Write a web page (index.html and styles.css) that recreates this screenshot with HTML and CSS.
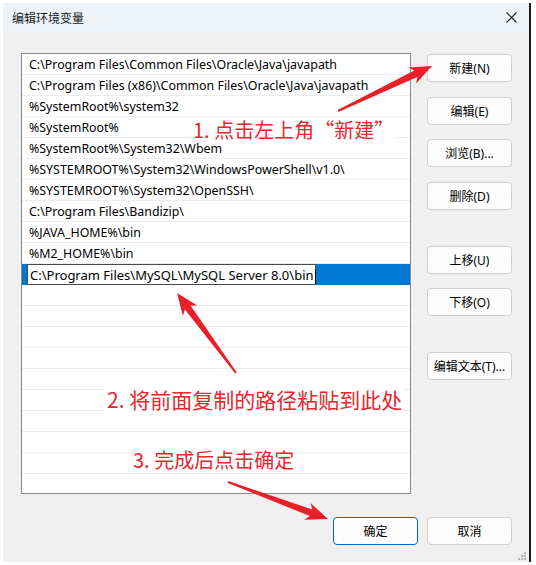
FILE: index.html
```html
<!DOCTYPE html>
<html lang="zh-CN">
<head>
  <meta charset="UTF-8">
  <title>编辑环境变量</title>
  <link rel="stylesheet" href="styles.css">
</head>
<body>
  <div class="window">
    <div class="titlebar">
      <span class="title">编辑环境变量</span>
      <span class="close">
        <svg width="11" height="11" viewBox="0 0 11 11"><path d="M0.5 0.5 L10.5 10.5 M10.5 0.5 L0.5 10.5" stroke="#222" stroke-width="1.1"/></svg>
      </span>
    </div>
    <div class="content">
      <div class="main">
        <div class="list">
          <div class="row">C:\Program Files\Common Files\Oracle\Java\javapath</div>
          <div class="row">C:\Program Files (x86)\Common Files\Oracle\Java\javapath</div>
          <div class="row">%SystemRoot%\system32</div>
          <div class="row">%SystemRoot%</div>
          <div class="row">%SystemRoot%\System32\Wbem</div>
          <div class="row">%SYSTEMROOT%\System32\WindowsPowerShell\v1.0\</div>
          <div class="row">%SYSTEMROOT%\System32\OpenSSH\</div>
          <div class="row">C:\Program Files\Bandizip\</div>
          <div class="row">%JAVA_HOME%\bin</div>
          <div class="row">%M2_HOME%\bin</div>
          <div class="row selected">
            <div class="edit">C:\Program Files\MySQL\MySQL Server 8.0\bin<span class="caret"></span></div>
          </div>
          <div class="row"></div>
          <div class="row"></div>
          <div class="row"></div>
          <div class="row"></div>
          <div class="row"></div>
          <div class="row"></div>
          <div class="row"></div>
          <div class="row"></div>
          <div class="row"></div>
          <div class="row last"></div>
        </div>
        <div class="side">
          <button class="btn">新建(N)</button>
          <button class="btn">编辑(E)</button>
          <button class="btn">浏览(B)...</button>
          <button class="btn">删除(D)</button>
          <button class="btn far">上移(U)</button>
          <button class="btn">下移(O)</button>
          <button class="btn far">编辑文本(T)...</button>
        </div>
      </div>
      <div class="footer">
        <button class="btn primary">确定</button>
        <button class="btn">取消</button>
      </div>
    </div>
    <svg class="grip" width="10" height="10" viewBox="0 0 10 10">
      <rect x="7" y="1" width="2" height="2" fill="#b4b4b4"/>
      <rect x="4" y="4" width="2" height="2" fill="#b4b4b4"/>
      <rect x="7" y="4" width="2" height="2" fill="#b4b4b4"/>
      <rect x="1" y="7" width="2" height="2" fill="#b4b4b4"/>
      <rect x="4" y="7" width="2" height="2" fill="#b4b4b4"/>
      <rect x="7" y="7" width="2" height="2" fill="#b4b4b4"/>
    </svg>
  </div>

  <!-- annotations drawn over the screenshot -->
  <div class="note note1">1. 点击左上角“新建”</div>
  <div class="note note2">2. 将前面复制的路径粘贴到此处</div>
  <div class="note note3">3. 完成后点击确定</div>
  <svg class="arrows" width="536" height="565" viewBox="0 0 536 565">
    <polygon points="338.4,111.9 417.3,77 416.1,83.6 432,66 408.3,67.4 414.3,70.6 337.6,110.1"/>
    <polygon points="236.8,372.4 190.5,305.4 197.3,305.4 177,293 182.9,316 184.9,309.6 235.2,373.6"/>
    <polygon points="227.7,482.9 309.9,516.1 304.3,519.8 328,519 310.5,503 312.3,509.5 228.3,481.1"/>
  </svg>
</body>
</html>
```

FILE: styles.css
```css
body {
  margin: 0;
  background: #fff;
  font-family: "Noto Sans", "Noto Sans CJK SC", sans-serif;
  font-size: 12px;
  color: #000;
}
.window {
  margin: 3px 0 0 3px;
  width: 526px;
  height: 559px;
  background: #f0f0f0;
  border-right: 2px solid #1e1e1e;
  position: relative;
}
.titlebar {
  height: 29px;
  background: #eef3f8;
  display: flex;
  align-items: center;
  justify-content: space-between;
  padding: 0 12px 0 9px;
}
.title {
  font-family: "Noto Sans CJK SC", sans-serif;
  font-size: 12px;
  color: #1a1a1a;
}
.close {
  display: flex;
}
.content {
  padding: 21px 17px 0 18px;
}
.main {
  display: flex;
  gap: 16px;
}
.list {
  width: 389px;
  height: 439px;
  border: 1px solid #8c8c94;
  background: #fff;
  overflow: hidden;
}
.row {
  height: 19px;
  padding-top: 1px;
  border-bottom: 1px solid #ececec;
  padding-left: 7px;
  line-height: 20px;
  font-size: 12.4px;
  white-space: nowrap;
}
.row.last {
  border-bottom: none;
}
.row.selected {
  background: #0078d4;
  border-bottom-color: #0078d4;
  padding-left: 5px;
  padding-top: 0;
  height: 20px;
}
.edit {
  width: 285px;
  height: 19px;
  line-height: 20px;
  font-size: 13px;
  background: #fff;
  border: 1px solid #4a4a4a;
  padding-left: 2px;
}
.caret {
  display: inline-block;
  width: 1px;
  height: 14px;
  background: #000;
  vertical-align: middle;
  margin-left: 1px;
}
.side {
  display: flex;
  flex-direction: column;
  gap: 14px;
  padding-top: 1px;
}
.btn {
  width: 85px;
  height: 28px;
  background: #fdfdfd;
  border: 1px solid #d0d0d0;
  border-radius: 4px;
  font-family: "Noto Sans", "Noto Sans CJK SC", sans-serif;
  font-size: 12px;
  color: #000;
  padding: 0;
}
.side .btn:nth-child(2),
.side .btn:nth-child(4) {
  margin-top: 1px;
}
.btn.far {
  margin-top: 22px;
}
.primary {
  border-color: #0067c0;
}
.footer {
  display: flex;
  justify-content: flex-end;
  gap: 9px;
  margin-top: 23px;
}
.grip {
  position: absolute;
  right: 2px;
  bottom: 1px;
}
.note {
  position: absolute;
  font-family: "Noto Sans CJK SC", sans-serif;
  font-size: 20px;
  line-height: 26px;
  color: #e8262e;
  background: #fff;
  padding: 0 2px;
}
.note1 {
  left: 191px;
  top: 117px;
}
.note2 {
  left: 105px;
  top: 386px;
  font-size: 21px;
}
.note3 {
  left: 131px;
  top: 447px;
}
.arrows {
  position: absolute;
  left: 0;
  top: 0;
}
.arrows polygon {
  fill: #e8202a;
}
```
